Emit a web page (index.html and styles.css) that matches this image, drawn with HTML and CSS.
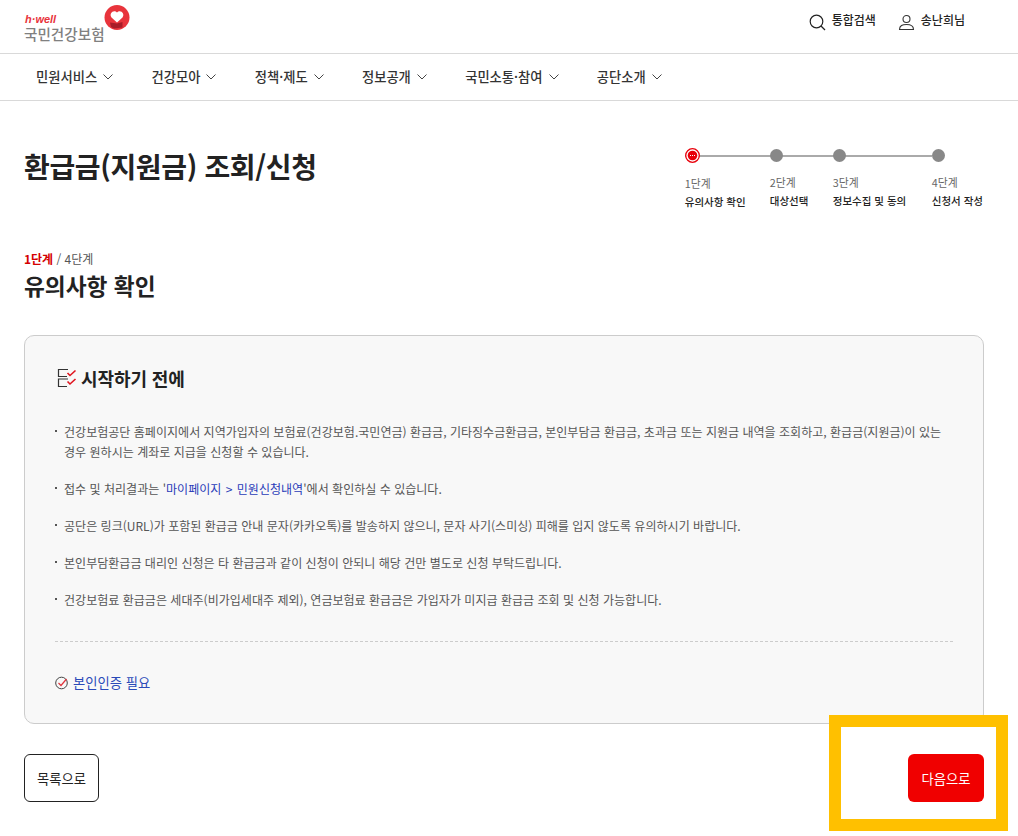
FILE: index.html
```html
<!DOCTYPE html>
<html lang="ko">
<head>
  <meta charset="UTF-8">
  <title>환급금(지원금) 조회/신청</title>
  <link rel="stylesheet" href="styles.css">
</head>
<body>
  <header class="top">
    <a class="logo">
      <span class="logo-text">
        <span class="logo-well">h·well</span>
        <span class="logo-name">국민건강보험</span>
      </span>
      <svg class="logo-mark" width="26" height="26" viewBox="0 0 26 26">
        <circle cx="13" cy="12.500" r="12.500" fill="#e8343c"/>
        <path d="M13 17.500 L7.500 12.500 C4.500 8 10 4 13 7.500 C16 4 21.500 8 18.500 12.500 Z" fill="#fff"/>
        <path d="M6 17.500 L13 18.500 L18.500 17 L18.500 22.500 L10 23.500 L7 22 Z" fill="#a81c28"/>
      </svg>
    </a>
    <div class="util">
      <a class="util-item">
        <svg width="17" height="17" viewBox="0 0 17 17" fill="none" stroke="#222" stroke-width="1.200"><circle cx="7.500" cy="7.500" r="6.300"/><path d="M12 12 L16 16"/></svg>
        통합검색
      </a>
      <a class="util-item">
        <svg width="17" height="17" viewBox="0 0 17 17" fill="none" stroke="#333" stroke-width="1.100"><circle cx="8.500" cy="5" r="3.500"/><path d="M1.500 15.500 C1.500 11.500 4.500 10.500 8.500 10.500 C12.500 10.500 15.500 11.500 15.500 15.500 Z"/></svg>
        송난희님
      </a>
    </div>
  </header>

  <nav class="gnb">
    <a class="gnb-item">민원서비스<svg class="chev" width="10" height="6" viewBox="0 0 10 6"><path d="M0.500 0.500 L5 5 L9.500 0.500"/></svg></a>
    <a class="gnb-item">건강모아<svg class="chev" width="10" height="6" viewBox="0 0 10 6"><path d="M0.500 0.500 L5 5 L9.500 0.500"/></svg></a>
    <a class="gnb-item">정책·제도<svg class="chev" width="10" height="6" viewBox="0 0 10 6"><path d="M0.500 0.500 L5 5 L9.500 0.500"/></svg></a>
    <a class="gnb-item">정보공개<svg class="chev" width="10" height="6" viewBox="0 0 10 6"><path d="M0.500 0.500 L5 5 L9.500 0.500"/></svg></a>
    <a class="gnb-item">국민소통·참여<svg class="chev" width="10" height="6" viewBox="0 0 10 6"><path d="M0.500 0.500 L5 5 L9.500 0.500"/></svg></a>
    <a class="gnb-item">공단소개<svg class="chev" width="10" height="6" viewBox="0 0 10 6"><path d="M0.500 0.500 L5 5 L9.500 0.500"/></svg></a>
  </nav>

  <main class="content">
    <div class="title-row">
      <h1>환급금(지원금) 조회/신청</h1>
      <ol class="steps">
        <li class="step">
          <svg class="dot-on" width="15" height="15" viewBox="0 0 15 15">
            <circle cx="7.500" cy="7.500" r="6.800" fill="#fff" stroke="#e8000b" stroke-width="1.300"/>
            <circle cx="7.500" cy="7.500" r="4.800" fill="#e8000b"/>
            <path d="M5 7 h1 v1 h-1 Z M7 7 h1 v1 h-1 Z M9 7 h1 v1 h-1 Z" fill="#fff"/>
          </svg>
          <span class="step-no">1단계</span>
          <strong>유의사항 확인</strong>
        </li>
        <li class="step">
          <span class="dot"></span>
          <span class="step-no">2단계</span>
          <strong>대상선택</strong>
        </li>
        <li class="step">
          <span class="dot"></span>
          <span class="step-no">3단계</span>
          <strong>정보수집 및 동의</strong>
        </li>
        <li class="step">
          <span class="dot"></span>
          <span class="step-no">4단계</span>
          <strong>신청서 작성</strong>
        </li>
      </ol>
    </div>

    <p class="stage"><b>1단계</b> / 4단계</p>
    <h2>유의사항 확인</h2>

    <section class="box">
      <h3>
        <svg width="20" height="20" viewBox="0 0 20 20" fill="none">
          <path d="M11 1.500 H1.500 V8.500 H10 M11 11 H1.500 V18.500 H10" stroke="#333" stroke-width="1.200"/>
          <path d="M10.500 5 L13 7.500 L18.500 2.500 M10.500 13.500 L13 16 L18.500 11" stroke="#e0141e" stroke-width="1.600"/>
        </svg>
        시작하기 전에
      </h3>
      <ul class="notes">
        <li>건강보험공단 홈페이지에서 지역가입자의 보험료(건강보험.국민연금) 환급금, 기타징수금환급금, 본인부담금 환급금, 초과금 또는 지원금 내역을 조회하고, 환급금(지원금)이 있는 경우 원하시는 계좌로 지급을 신청할 수 있습니다.</li>
        <li>접수 및 처리결과는 '<span class="link">마이페이지 &gt; 민원신청내역</span>'에서 확인하실 수 있습니다.</li>
        <li>공단은 링크(URL)가 포함된 환급금 안내 문자(카카오톡)를 발송하지 않으니, 문자 사기(스미싱) 피해를 입지 않도록 유의하시기 바랍니다.</li>
        <li>본인부담환급금 대리인 신청은 타 환급금과 같이 신청이 안되니 해당 건만 별도로 신청 부탁드립니다.</li>
        <li>건강보험료 환급금은 세대주(비가입세대주 제외), 연금보험료 환급금은 가입자가 미지급 환급금 조회 및 신청 가능합니다.</li>
      </ul>
      <p class="auth">
        <svg width="14" height="14" viewBox="0 0 14 14" fill="none">
          <circle cx="6.500" cy="7" r="5.800" stroke="#444" stroke-width="1"/>
          <path d="M3.500 7 L6 9.500 L11.500 3" stroke="#e0343c" stroke-width="1.200"/>
        </svg>
        본인인증 필요
      </p>
    </section>

    <div class="btns">
      <a class="btn btn-line">목록으로</a>
      <a class="btn btn-red">다음으로</a>
    </div>
  </main>

  <div class="highlight"></div>
</body>
</html>
```

FILE: styles.css
```css
* {
  box-sizing: border-box;
}
body {
  margin: 0;
  position: relative;
  height: 836px;
  overflow: hidden;
  background-color: #fff;
  color: #222;
  font-family: "Noto Sans CJK KR", "Noto Sans", sans-serif;
}
.top {
  display: flex;
  justify-content: space-between;
  height: 54px;
  padding: 0 53px 0 24px;
  border-bottom: 1px solid #d9d9d9;
}
.logo {
  display: flex;
  align-items: flex-start;
  padding-top: 5px;
}
.logo-text {
  display: flex;
  flex-direction: column;
  padding-top: 9px;
}
.logo-well {
  height: 11px;
  padding-left: 1px;
  color: #e8343c;
  font-family: "Liberation Sans", sans-serif;
  font-size: 11px;
  font-weight: bold;
  font-style: italic;
  line-height: 11px;
}
.logo-name {
  color: #808080;
  font-size: 14.600px;
  font-weight: 500;
  line-height: 17px;
  white-space: nowrap;
}
.logo-mark {
  margin-left: -1px;
}
.util {
  display: flex;
  gap: 22px;
  padding-top: 12px;
}
.util-item {
  display: flex;
  align-items: flex-start;
  gap: 6px;
  color: #222;
  font-size: 12px;
  font-weight: 500;
  line-height: 15px;
}
.util-item svg {
  margin-top: 2px;
}
.gnb {
  display: flex;
  align-items: center;
  gap: 38.300px;
  height: 47px;
  padding: 0 0 2px 36px;
  border-bottom: 1px solid #d9d9d9;
}
.gnb-item {
  display: flex;
  align-items: center;
  gap: 6px;
  color: #333;
  font-size: 13.300px;
  font-weight: 500;
}
.chev {
  margin-top: 2px;
  fill: none;
  stroke: #444;
  stroke-width: 1;
}
.content {
  padding: 0 34px 0 24px;
}
.title-row {
  display: flex;
  justify-content: space-between;
  height: 150px;
  padding-top: 45px;
}
h1 {
  margin: 0;
  color: #222;
  font-size: 28px;
  font-weight: 700;
  letter-spacing: -0.350px;
  line-height: 40px;
}
.steps {
  display: flex;
  margin: 2px 0 0;
  padding: 0 1px 0 0;
  list-style: none;
}
.step {
  position: relative;
  display: flex;
  flex-direction: column;
  font-size: 11px;
}
.step:nth-child(1) { width: 85px; }
.step:nth-child(2) { width: 63px; }
.step:nth-child(3) { width: 99px; }
.step:nth-child(-n+3)::before {
  content: "";
  position: absolute;
  left: 0;
  right: 0;
  top: 7px;
  height: 2px;
  background-color: #aaa;
}
.dot,
.dot-on {
  position: relative;
  display: block;
  flex: none;
}
.dot {
  width: 13px;
  height: 13px;
  margin: 1px 0 13px;
  border-radius: 50%;
  background-color: #888;
}
.dot-on {
  margin-bottom: 13px;
}
.step-no {
  color: #666;
  font-size: 10.800px;
  line-height: 14px;
}
.step strong {
  margin-top: 5px;
  color: #222;
  font-size: 10.500px;
  font-weight: 500;
  line-height: 14px;
  white-space: nowrap;
}
.stage {
  margin: 0;
  color: #555;
  font-size: 12px;
  line-height: 16px;
}
.stage b {
  color: #d40000;
}
h2 {
  margin: 3px 0 0;
  color: #222;
  font-size: 22.700px;
  font-weight: 700;
  line-height: 32px;
}
.box {
  height: 389px;
  margin-top: 33px;
  padding: 28px 30px 0;
  border: 1px solid #ccc;
  border-radius: 10px;
  background-color: #f8f8f8;
}
h3 {
  display: flex;
  align-items: center;
  gap: 4px;
  margin: 0 0 0 2px;
  color: #222;
  font-size: 18px;
  font-weight: 700;
  letter-spacing: -0.100px;
  line-height: 28px;
}
.notes {
  margin: 30.400px 0 0;
  padding: 0 0 14px;
  list-style: none;
  border-bottom: 1px dashed #ccc;
}
.notes li {
  position: relative;
  margin-bottom: 17px;
  padding-left: 9px;
  color: #555;
  font-size: 12.040px;
  line-height: 20px;
}
.notes li::before {
  content: "";
  position: absolute;
  left: 0;
  top: 8px;
  width: 2px;
  height: 2px;
  background-color: #555;
}
.link {
  color: #2a3cb8;
  word-spacing: 1px;
}
.auth {
  display: flex;
  align-items: center;
  gap: 4px;
  margin: 31px 0 0;
  color: #2a4ab8;
  font-size: 13.300px;
  line-height: 20px;
}
.btns {
  display: flex;
  justify-content: space-between;
  margin-top: 30px;
}
.btn {
  display: flex;
  align-items: center;
  justify-content: center;
  width: 75px;
  height: 48px;
  border-radius: 6px;
  font-size: 13.300px;
}
.btn-line {
  border: 1px solid #222;
  color: #222;
}
.btn-red {
  width: 76px;
  background-color: #f00000;
  color: #fff;
}
.highlight {
  position: absolute;
  left: 829px;
  top: 715px;
  width: 179px;
  height: 116px;
  border: 12px solid #ffc000;
}
```
